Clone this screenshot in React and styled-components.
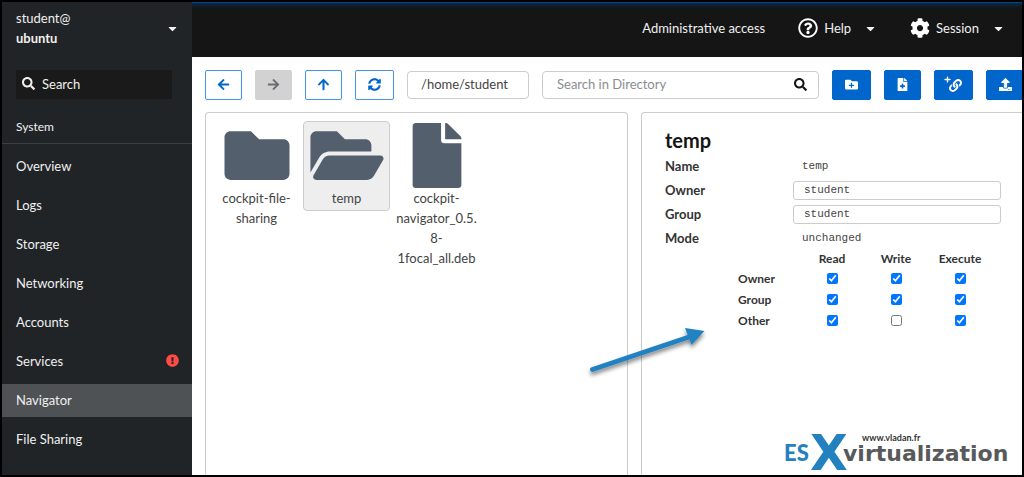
import React, { useState } from "react";
import styled, { createGlobalStyle } from "styled-components";
import {
  FaArrowLeft,
  FaArrowRight,
  FaArrowUp,
  FaCaretDown,
  FaCog,
  FaExclamationCircle,
  FaFile,
  FaFileMedical,
  FaFolder,
  FaFolderOpen,
  FaFolderPlus,
  FaLink,
  FaPlus,
  FaRegQuestionCircle,
  FaSearch,
  FaSyncAlt,
  FaUpload,
} from "react-icons/fa";

const GlobalStyle = createGlobalStyle`
  * {
    box-sizing: border-box;
  }

  body {
    margin: 0;
    background-color: #000;
  }

  body, button, input {
    font-family: Lato, "Liberation Sans", sans-serif;
  }

  svg {
    display: block;
    flex-shrink: 0;
  }
`;

const Page = styled.div`
  position: relative;
  display: flex;
  min-height: 100vh;
  border: 2px solid #000;
  overflow: hidden;
  font-size: 13px;
  color: #151515;
`;

const Sidebar = styled.aside`
  width: 190px;
  flex-shrink: 0;
  background-color: #212427;
  color: #f0f0f0;
`;

const HostButton = styled.button`
  display: flex;
  width: 100%;
  align-items: center;
  justify-content: space-between;
  padding: 6px 13px 22px 14px;
  border: none;
  background: none;
  color: #f0f0f0;
  font-size: 13px;
  line-height: 20px;
  text-align: left;
  cursor: pointer;
`;

const HostName = styled.span`
  display: flex;
  flex-direction: column;
`;

const SidebarSearch = styled.label`
  display: flex;
  align-items: center;
  gap: 7px;
  height: 29px;
  margin: 0 20px 0 14px;
  padding: 0 6px 2px;
  background-color: #1a1a1a;
`;

const SidebarInput = styled.input`
  width: 100%;
  padding: 0;
  border: none;
  outline: none;
  background: none;
  color: #f0f0f0;
  font-size: 13px;

  &::placeholder {
    color: #f0f0f0;
    opacity: 1;
  }
`;

const SectionTitle = styled.h2`
  margin: 18px 0 6px;
  padding: 0 14px 6px;
  border-bottom: 1px solid #3c3f42;
  font-size: 12px;
  font-weight: 400;
  line-height: 20px;
`;

const Nav = styled.nav`
  display: flex;
  flex-direction: column;
  gap: 6px;
`;

const NavLink = styled.a`
  display: flex;
  align-items: center;
  justify-content: space-between;
  height: 33px;
  padding: 0 13px 2px 14px;
  background-color: ${(props) => (props.$active ? "#4f5255" : "transparent")};
  color: #f0f0f0;
  text-decoration: none;
`;

const Content = styled.div`
  display: flex;
  flex: 1;
  flex-direction: column;
  min-width: 0;
  overflow: hidden;
  background-color: #fff;
`;

const Header = styled.header`
  display: flex;
  align-items: center;
  justify-content: flex-end;
  gap: 33px;
  height: 55px;
  padding: 0 17px 3px;
  background: linear-gradient(#004a8f, #0b2438 2px, #151515 7px);
`;

const HeaderButton = styled.button`
  display: flex;
  align-items: center;
  gap: 6px;
  padding: 0;
  border: none;
  background: none;
  color: #f0f0f0;
  font-size: 13px;
  cursor: pointer;
`;

const HeaderCaret = styled(FaCaretDown)`
  margin-left: 7px;
`;

// the navigator is slightly wider than the frame that holds it
const Navigator = styled.main`
  display: flex;
  flex: 1;
  flex-direction: column;
  gap: 12px;
  width: calc(100% + 3px);
  padding: 13px 0 0 13px;
`;

const Toolbar = styled.div`
  display: flex;
  align-items: center;
  gap: 13px;
`;

const ToolButton = styled.button`
  display: flex;
  align-items: center;
  justify-content: center;
  flex-shrink: 0;
  width: ${(props) => (props.$wide ? 39 : 37)}px;
  height: 30px;
  padding: 0 0 1px;
  border: 1px solid #4394e5;
  border-radius: 2px;
  background-color: #fff;
  color: #06c;
  font-size: 13px;
  cursor: pointer;

  &:disabled {
    border-color: #d2d2d2;
    background-color: #d2d2d2;
    color: #6a6e73;
  }
`;

const ActionButton = styled(ToolButton)`
  border-color: #06c;
  background-color: #06c;
  color: #fff;
`;

const PathInput = styled.input`
  width: 122px;
  height: 28px;
  padding: 0 13px 2px;
  border: 1px solid #ccc;
  border-radius: 4px;
  color: #444;
  font-size: 13px;
`;

const DirectorySearch = styled.label`
  display: flex;
  flex: 1;
  align-items: center;
  height: 28px;
  padding: 0 11px 2px 14px;
  border: 1px solid #ccc;
  border-radius: 4px;
`;

const DirectoryInput = styled.input`
  flex: 1;
  min-width: 0;
  padding: 0;
  border: none;
  outline: none;
  font-size: 13px;

  &::placeholder {
    color: #8a8d90;
    opacity: 1;
  }
`;

const Panels = styled.div`
  display: grid;
  flex: 1;
  grid-template-columns: minmax(0, 1fr) 384px;
  gap: 13px;
`;

const Panel = styled.section`
  border: 1px solid #ccc;
  border-bottom: none;
  border-radius: 4px 4px 0 0;
`;

const FileList = styled(Panel)`
  display: flex;
  flex-wrap: wrap;
  align-items: flex-start;
  align-content: flex-start;
  gap: 3px;
  padding: 8px 7px;
`;

const FileItem = styled.button`
  display: flex;
  flex-direction: column;
  align-items: center;
  width: 87px;
  padding: 1px 2px 2px;
  border: 1px solid ${(props) => (props.$selected ? "#ccc" : "transparent")};
  border-radius: 4px;
  background-color: ${(props) => (props.$selected ? "#eee" : "transparent")};
  color: #444;
  font-size: 13px;
  line-height: 20px;
  cursor: pointer;

  svg {
    width: 74px;
    height: 65px;
    color: #535f6d;
  }
`;

const FileName = styled.span`
  max-width: 100%;
  overflow-wrap: anywhere;
`;

const Details = styled(Panel)`
  padding: 15px 23px;
`;

const Title = styled.h1`
  margin: 0 0 2px;
  font-size: 20px;
  font-weight: 700;
  line-height: 24px;
`;

const Field = styled.div`
  display: grid;
  grid-template-columns: 128px 1fr;
  align-items: center;
  height: 24px;
  font-size: 13px;
`;

const FieldName = styled.label`
  font-weight: 700;
  color: #333;
`;

const FieldValue = styled.output`
  padding-left: 9px;
  color: #444;
  font: 11px "Liberation Mono", monospace;
`;

const FieldInput = styled.input`
  width: 100%;
  height: 19px;
  padding: 0 10px;
  border: 1px solid #ccc;
  border-radius: 3px;
  color: #444;
  font: 11px "Liberation Mono", monospace;
`;

const ModeTable = styled.table`
  margin-left: 73px;
  border-collapse: collapse;
  table-layout: fixed;
  width: 254px;
  font-size: 12px;
  line-height: 16px;
  color: #333;

  th, td {
    width: 64px;
    height: 21px;
    padding: 0;
    text-align: center;
  }

  thead th, thead td {
    height: 18px;
  }

  th:first-child, td:first-child {
    width: 62px;
    text-align: left;
  }
`;

const Checkbox = styled.input`
  display: block;
  width: 11px;
  height: 11px;
  margin: 0 auto;
`;

const Pointer = styled.svg`
  position: absolute;
  left: 582px;
  top: 320px;
  pointer-events: none;
`;

const Watermark = styled.svg`
  position: absolute;
  right: 6px;
  bottom: 0;
  overflow: visible;
  pointer-events: none;
`;

const navItems = [
  "Overview",
  "Logs",
  "Storage",
  "Networking",
  "Accounts",
  "Services",
  "Navigator",
  "File Sharing",
];

const files = [
  { name: "cockpit-file-sharing", Icon: FaFolder },
  { name: "temp", Icon: FaFolderOpen },
  { name: "cockpit-navigator_0.5.8-1focal_all.deb", Icon: FaFile },
];

const permissions = ["Read", "Write", "Execute"];

const initialMode = {
  Owner: [true, true, true],
  Group: [true, true, true],
  Other: [true, false, true],
};

function NewLinkIcon() {
  return (
    <svg width="19" height="18" viewBox="0 0 19 18" aria-hidden="true">
      <FaLink x="5" y="3" size={13} />
      <FaPlus x="0" y="0" size={7} />
    </svg>
  );
}

function ModeGrid() {
  const [mode, setMode] = useState(initialMode);

  const toggle = (who, index) =>
    setMode({
      ...mode,
      [who]: mode[who].map((value, i) => (i === index ? !value : value)),
    });

  return (
    <ModeTable>
      <thead>
        <tr>
          <td />
          {permissions.map((permission) => (
            <th key={permission} scope="col">
              {permission}
            </th>
          ))}
        </tr>
      </thead>
      <tbody>
        {Object.keys(mode).map((who) => (
          <tr key={who}>
            <th scope="row">{who}</th>
            {permissions.map((permission, index) => (
              <td key={permission}>
                <Checkbox
                  type="checkbox"
                  aria-label={`${who} ${permission}`}
                  checked={mode[who][index]}
                  onChange={() => toggle(who, index)}
                />
              </td>
            ))}
          </tr>
        ))}
      </tbody>
    </ModeTable>
  );
}

function App() {
  const [selected, setSelected] = useState("temp");

  return (
    <Page>
      <GlobalStyle />
      <Sidebar>
        <HostButton>
          <HostName>
            <span>student@</span>
            <strong>ubuntu</strong>
          </HostName>
          <FaCaretDown size={13} />
        </HostButton>
        <SidebarSearch>
          <FaSearch size={13} />
          <SidebarInput aria-label="Search" placeholder="Search" />
        </SidebarSearch>
        <SectionTitle>System</SectionTitle>
        <Nav>
          {navItems.map((item) => (
            <NavLink key={item} href="#" $active={item === "Navigator"}>
              {item}
              {item === "Services" && (
                <FaExclamationCircle size={13} color="#fe4b46" />
              )}
            </NavLink>
          ))}
        </Nav>
      </Sidebar>
      <Content>
        <Header>
          <HeaderButton>Administrative access</HeaderButton>
          <HeaderButton>
            <FaRegQuestionCircle size={20} color="#fff" />
            Help
            <HeaderCaret size={13} />
          </HeaderButton>
          <HeaderButton>
            <FaCog size={20} color="#fff" />
            Session
            <HeaderCaret size={13} />
          </HeaderButton>
        </Header>
        <Navigator>
          <Toolbar>
            <ToolButton aria-label="Back">
              <FaArrowLeft />
            </ToolButton>
            <ToolButton aria-label="Forward" disabled>
              <FaArrowRight />
            </ToolButton>
            <ToolButton aria-label="Up">
              <FaArrowUp />
            </ToolButton>
            <ToolButton aria-label="Refresh" $wide>
              <FaSyncAlt />
            </ToolButton>
            <PathInput aria-label="Path" defaultValue="/home/student" />
            <DirectorySearch>
              <DirectoryInput
                aria-label="Search in Directory"
                placeholder="Search in Directory"
              />
              <FaSearch size={13} />
            </DirectorySearch>
            <ActionButton aria-label="New folder" $wide>
              <FaFolderPlus />
            </ActionButton>
            <ActionButton aria-label="New file">
              <FaFileMedical />
            </ActionButton>
            <ActionButton aria-label="New link" $wide>
              <NewLinkIcon />
            </ActionButton>
            <ActionButton aria-label="Upload" $wide>
              <FaUpload />
            </ActionButton>
          </Toolbar>
          <Panels>
            <FileList>
              {files.map(({ name, Icon }) => (
                <FileItem
                  key={name}
                  $selected={name === selected}
                  onClick={() => setSelected(name)}
                >
                  <Icon />
                  <FileName>{name}</FileName>
                </FileItem>
              ))}
            </FileList>
            <Details>
              <Title>temp</Title>
              <Field>
                <FieldName htmlFor="name">Name</FieldName>
                <FieldValue id="name">temp</FieldValue>
              </Field>
              <Field>
                <FieldName htmlFor="owner">Owner</FieldName>
                <FieldInput id="owner" defaultValue="student" />
              </Field>
              <Field>
                <FieldName htmlFor="group">Group</FieldName>
                <FieldInput id="group" defaultValue="student" />
              </Field>
              <Field>
                <FieldName htmlFor="mode">Mode</FieldName>
                <FieldValue id="mode">unchanged</FieldValue>
              </Field>
              <ModeGrid />
            </Details>
          </Panels>
        </Navigator>
      </Content>
      <Pointer width="130" height="64" viewBox="0 0 130 64" aria-hidden="true">
        <defs>
          <filter id="shadow" x="-10%" y="-10%" width="120%" height="140%">
            <feDropShadow dx="0" dy="3" stdDeviation="2" floodOpacity="0.5" />
          </filter>
        </defs>
        <g filter="url(#shadow)" fill="#2381c0">
          <path
            d="M8.5 47.5 L108 14"
            stroke="#2381c0"
            strokeWidth="5"
            strokeLinecap="round"
          />
          <path d="M101 6 L120.5 9 L107.5 23 Z" />
        </g>
      </Pointer>
      <Watermark width="236" height="48" viewBox="0 0 236 48">
        <g fontWeight="700">
          <text x="4" y="34" fontSize="22" fontWeight="900" fill="#2381c0">
            ES
          </text>
          <text
            x="30"
            y="43"
            fontSize="49"
            fontFamily="DejaVu Sans"
            fill="#2381c0"
          >
            X
          </text>
          <text
            x="63"
            y="34"
            fontSize="22"
            fontFamily="DejaVu Sans"
            fill="#58595b"
          >
            virtualization
          </text>
          <text x="82" y="14" fontSize="9" fill="#333">
            www.vladan.fr
          </text>
        </g>
      </Watermark>
    </Page>
  );
}

export default App;
